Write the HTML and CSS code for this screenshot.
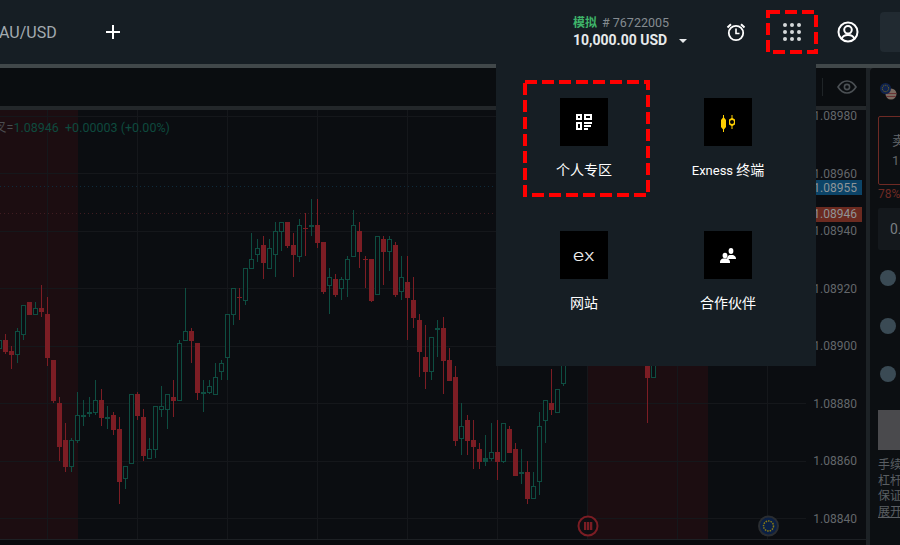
FILE: index.html
```html
<!DOCTYPE html>
<html lang="zh">
<head>
<meta charset="utf-8">
<title>Exness</title>
<link rel="stylesheet" href="styles.css">
</head>
<body>
<div class="app">
  <header class="topbar">
    <div class="tabs">
      <span class="tab">AU/USD</span>
      <svg class="plus" width="14" height="14" viewBox="0 0 14 14"><path d="M7 0v14M0 7h14" stroke="#fff" stroke-width="2"/></svg>
    </div>
    <div class="account">
      <div class="acc-top"><span class="acc-mode">模拟</span><span class="acc-id"># 76722005</span></div>
      <div class="acc-bal">10,000.00 USD<span class="caret"></span></div>
    </div>
    <svg class="ic-alarm" width="20" height="20" viewBox="0 0 20 20" fill="none" stroke="#fff" stroke-width="1.8"><circle cx="10" cy="11" r="7.2"/><path d="M10 6.500V11.500H13.500" stroke-width="1.6"/><path d="M1.500 5.500 5 2.200M18.500 5.500 15 2.200" stroke-width="2"/></svg>
    <div class="apps">
      <svg width="20" height="20" viewBox="0 0 20 20" fill="#d5d8da"><circle cx="3" cy="3" r="2"/><circle cx="10" cy="3" r="2"/><circle cx="17" cy="3" r="2"/><circle cx="3" cy="10" r="2"/><circle cx="10" cy="10" r="2"/><circle cx="17" cy="10" r="2"/><circle cx="3" cy="17" r="2"/><circle cx="10" cy="17" r="2"/><circle cx="17" cy="17" r="2"/></svg>
      <svg class="dash" viewBox="0 0 52 44" width="52" height="44"><rect x="2" y="2" width="48" height="40" fill="none" stroke="#f00" stroke-width="4" stroke-dasharray="12 5"/></svg>
    </div>
    <svg class="ic-user" width="22" height="22" viewBox="0 0 22 22" fill="none" stroke="#fff" stroke-width="2"><circle cx="11" cy="11" r="9.500"/><circle cx="11" cy="8.800" r="3.800"/><path d="M4.600 18c.8-2.800 3.200-4 6.400-4s5.600 1.200 6.400 4"/></svg>
    <div class="deposit"></div>
  </header>
  <div class="sep-top"></div>

  <div class="main">
    <section class="chart-col">
      <div class="toolbar">
        <span class="tb-div"></span>
        <svg class="ic-eye" width="20" height="14" viewBox="0 0 20 14" fill="none" stroke="#4b5054" stroke-width="1.6"><path d="M1 7c2.500-4 5.500-6 9-6s6.500 2 9 6c-2.500 4-5.500 6-9 6s-6.500-2-9-6z"/><circle cx="10" cy="7" r="2.600"/></svg>
      </div>
      <div class="tb-sep"></div>
      <svg id="chart" class="chart" width="866" height="429" viewBox="0 110 866 429">
        <rect x="0" y="110" width="866" height="429" fill="#0b0d11"/>
        <rect x="0" y="110" width="78" height="429" fill="#1c0d11"/>
        <rect x="587" y="110" width="121" height="429" fill="#1c0d11"/>
        <path d="M0 116.500H806M0 173.500H806M0 231.500H806M0 288.500H806M0 346.500H806M0 403.500H806M0 461.500H806M0 518.500H806M47.500 110V539M137.500 110V539M227.500 110V539M317.500 110V539M407.500 110V539M497.500 110V539M587.500 110V539M677.500 110V539M767.500 110V539" stroke="#15171b" stroke-width="1"/>
        <path d="M0 186.500H815" stroke="#0e2b3c" stroke-dasharray="1 3"/>
        <path d="M0 213.500H815" stroke="#3f1c21" stroke-dasharray="1 3"/>
        <g id="candles"></g>
        <text class="legend" x="-6" y="132"><tspan class="legend-k">叉=</tspan>1.08946  +0.00003 (+0.00%)</text>
        <rect x="812" y="180" width="50" height="15" fill="#0c4468"/>
        <rect x="812" y="207" width="50" height="15" fill="#6b2a20"/>
        <g class="axis">
          <text x="857" y="120">1.08980</text>
          <text x="857" y="178">1.08960</text>
          <text class="tag" x="857" y="192">1.08955</text>
          <text class="tag" x="857" y="218">1.08946</text>
          <text x="857" y="235">1.08940</text>
          <text x="857" y="293">1.08920</text>
          <text x="857" y="350">1.08900</text>
          <text x="857" y="408">1.08880</text>
          <text x="857" y="465">1.08860</text>
          <text x="857" y="523">1.08840</text>
        </g>
        <circle cx="588" cy="526" r="9.500" fill="#0f0d11" stroke="#7b1d24" stroke-width="2"/>
        <path d="M584 522h2.300v8H584zM587 522h2.300v8H587zM590 522h2.300v8H590z" fill="#7b1d24"/>
        <circle cx="768.500" cy="526" r="9.500" fill="#0a1f44" stroke="#2a2d31" stroke-width="2"/>
        <circle cx="768.500" cy="526" r="5" fill="none" stroke="#8a7a14" stroke-width="1.500" stroke-dasharray="1.500 1"/>
      </svg>
      <div class="chart-foot"></div>
    </section>
    <div class="gutter"></div>
    <aside class="panel">
      <svg class="flags" width="17" height="17" viewBox="0 0 17 17"><circle cx="11" cy="11" r="5.500" fill="#7a6a60"/><path d="M5.500 10.500h11M6 13.500h10" stroke="#6a3234" stroke-width="1.200"/><circle cx="5.500" cy="5.500" r="5.500" fill="#10234e"/><circle cx="5.500" cy="5.500" r="3.200" fill="none" stroke="#8a7a14" stroke-dasharray="1 1"/></svg>
      <div class="sell"><div class="sell-t">卖出</div><div class="sell-p">1.08946</div></div>
      <div class="pct">78%</div>
      <div class="input">0.01</div>
      <div class="radio"></div>
      <div class="radio"></div>
      <div class="radio"></div>
      <div class="confirm"></div>
      <div class="info">
        <div>手续费</div>
        <div>杠杆</div>
        <div>保证金</div>
        <div class="info-u">展开</div>
      </div>
    </aside>
  </div>

  <nav class="menu">
    <a class="item">
      <span class="tile"><svg width="16" height="16" viewBox="0 0 16 16" fill="none" stroke="#fff" stroke-width="2"><rect x="1" y="1" width="4" height="4"/><rect x="9" y="1" width="6" height="4"/><rect x="1" y="9" width="4" height="6"/><path d="M8 9h8M8 12h7M8 15h4"/></svg></span>
      <span class="label">个人专区</span>
      <svg class="dash dash-item" width="127" height="117" viewBox="0 0 127 117"><rect x="2" y="2" width="123" height="113" fill="none" stroke="#f00" stroke-width="4" stroke-dasharray="12 5"/></svg>
    </a>
    <a class="item">
      <span class="tile"><svg class="ic-candle" width="14" height="17" viewBox="0 0 14 17" fill="#ffcf01"><path d="M2 0h1v2.500L5 5v7l-2 2.500V17H2v-2.500L0 12V5l2-2.500z"/><path fill-rule="evenodd" d="M10.500 0h1v3L14 4.500v5L11.500 11v3h-1v-3L8 9.500v-5L10.500 3zM11 5a2 2 0 1 0 0 4 2 2 0 0 0 0-4z"/></svg></span>
      <span class="label"><span class="lat">Exness</span> 终端</span>
    </a>
    <a class="item">
      <span class="tile"><span class="ex">ex</span></span>
      <span class="label">网站</span>
    </a>
    <a class="item">
      <span class="tile"><svg width="16" height="15" viewBox="0 0 16 15" fill="#fff"><ellipse cx="11" cy="3" rx="2.400" ry="3"/><path d="M7 11c0-3 2-4 2.500-4h3c1 0 3.500 1 3.500 4z"/><ellipse cx="5" cy="7.500" rx="2.400" ry="2.800"/><path d="M0 15v-1.500c0-1.500 2-3 3-3h4c1 0 3 1.500 3 3V15z"/></svg></span>
      <span class="label">合作伙伴</span>
    </a>
  </nav>
</div>
<script src="chart.js"></script>
</body>
</html>
```
FILE: styles.css
```css
* { box-sizing: border-box; }
html, body { margin: 0; padding: 0; height: 100%; overflow: hidden; background: #080a0d; }
body { font-family: Roboto, "Noto Sans CJK SC", sans-serif; color: #fff; }
.app { position: relative; width: 900px; height: 545px; overflow: hidden; display: flex; flex-direction: column; }

.topbar { height: 64px; background: #161e24; display: flex; align-items: center; flex: none; }
.tabs { display: flex; align-items: center; width: 573px; flex: none; }
.tab { font-size: 16px; color: #a3abb0; margin-left: -1px; width: 107px; flex: none; }
.plus { flex: none; }
.account { width: 153px; flex: none; margin-top: -1px; }
.acc-top { font-size: 12px; line-height: 16px; display: flex; gap: 5px; }
.acc-mode { color: #3fb56a; font-weight: 700; }
.acc-id { color: #858c91; font-size: 12.5px; }
.acc-bal { font-size: 14px; font-weight: 700; line-height: 18px; color: #e6e9eb; display: flex; align-items: center; }
.caret { width: 0; height: 0; border: 4px solid transparent; border-top-color: #e6e9eb; border-bottom: 0; margin-left: 12px; margin-top: 2px; }
.ic-alarm { flex: none; margin-top: -1px; }
.apps { position: relative; width: 52px; height: 44px; margin-left: 20px; display: flex; align-items: center; justify-content: center; flex: none; margin-top: -1px; }
.dash { position: absolute; left: 0; top: 0; }
.ic-user { flex: none; margin-left: 19px; }
.deposit { width: 60px; height: 40px; background: #212a31; border-radius: 4px; margin-left: 21px; flex: none; }

.sep-top { height: 4px; background: #41484a; flex: none; }
.main { display: flex; flex: 1; min-height: 0; background: #23282b; }
.chart-col { width: 866px; flex: none; display: flex; flex-direction: column; background: #080a0d; }
.toolbar { height: 38px; background: #0a0d10; display: flex; align-items: center; justify-content: flex-end; padding-right: 9px; border-radius: 0 0 4px 0; flex: none; }
.tb-div { width: 1px; height: 18px; background: #1f2427; margin-right: 14px; }
.tb-sep { height: 4px; background: #23272a; flex: none; }
.chart { display: block; flex: none; }
.chart-foot { flex: 1; border-top: 1px solid #1d2024; }
.gutter { width: 4px; flex: none; background: #1d2226; }
.panel { flex: 1; min-width: 0; background: #0c0f12; border-radius: 4px 0 0 0; padding: 15px 0 0 8px; width: 30px; white-space: nowrap; overflow: hidden; }

.legend { font-family: Roboto, "Noto Sans CJK SC", sans-serif; font-size: 12.5px; fill: #0e4a3e; white-space: pre; }
.legend-k { fill: #4a4d50; }
.axis text { font-family: Roboto, sans-serif; font-size: 12px; fill: #63676b; text-anchor: end; }
.axis .tag { fill: #8f9497; }

.flags { display: block; margin: 0 0 0 2px; }
.sell { width: 60px; height: 69px; margin-top: 16px; border: 1px solid #6e2a24; border-radius: 2px; text-align: left; padding: 14px 0 0 13px; font-size: 13px; color: #63676b; line-height: 20px; }
.pct { font-size: 12px; color: #6e2a24; line-height: 18px; }
.input { width: 60px; height: 42px; margin-top: 5px; background: #14181c; font-size: 14px; color: #7a7f83; line-height: 42px; padding-left: 12px; border-radius: 2px; }
.radio { width: 16px; height: 16px; border-radius: 50%; background: #3a4a54; margin: 32px 0 0 2px; }
.input + .radio { margin-top: 20px; }
.confirm { width: 60px; height: 40px; background: #4a4a4d; margin-top: 28px; }
.info { font-size: 12px; line-height: 15.500px; color: #5a5f63; margin-top: 8px; }
.info-u { text-decoration: underline; }

.menu { position: absolute; left: 496px; top: 64px; width: 320px; height: 302px; background: #161e24; padding: 34px 16px 0; display: grid; grid-template-columns: 144px 144px; grid-auto-rows: 133px; z-index: 5; }
.item { position: relative; display: flex; flex-direction: column; align-items: center; }
.tile { width: 48px; height: 48px; background: #000; display: flex; align-items: center; justify-content: center; flex: none; }
.label { font-family: "Noto Sans CJK SC", sans-serif; font-size: 14px; line-height: 20px; margin-top: 13px; color: #fff; }
.lat { font-family: Roboto, sans-serif; font-size: 13px; }
.dash-item { left: 11px; top: -18px; }
.ex { font-family: Inter, sans-serif; font-size: 16px; line-height: 16px; font-weight: 300; color: #eee; margin-top: -1px; transform: scaleX(1.25); }
.ic-candle { margin-top: 2px; }
```
FILE: chart.js
```js
// [up?, wickTop, wickBottom, bodyTop, bodyBottom] at 3x price pixels from y=180
var D = [
[1,480,507,480,507],[0,462,522,480,516],[0,498,567,513,525],[1,444,549,454,525],[1,376,480,376,465],[0,366,405,366,405],[1,366,405,385,404],[0,315,411,384,396],[0,351,558,402,534],[0,540,669,540,663],[0,651,843,669,801],[0,729,876,780,861],[1,774,876,780,861],[1,636,789,705,783],[1,660,738,706,708],[1,651,711,697,699],[1,600,705,660,699],[0,627,738,660,714],[1,678,747,711,714],[0,696,765,705,750],[0,711,972,747,906],[1,858,927,858,897],[1,642,852,642,852],[0,636,720,642,708],[0,687,843,711,828],[1,774,837,807,837],[1,678,834,678,810],[1,618,711,678,690],[1,642,747,642,690],[0,600,711,651,663],[1,480,663,489,663],[1,324,483,453,483],[0,444,549,453,483],[0,489,660,489,639],[1,600,696,636,639],[1,600,642,618,639],[1,549,645,591,645],[1,540,600,549,576],[1,402,600,402,534],[1,324,435,324,405],[0,324,420,351,354],[1,264,375,264,363],[1,159,267,237,267],[1,177,246,204,225],
[0,168,297,195,249],[1,177,267,204,267],[1,126,291,153,225],[1,126,213,126,156],[0,126,204,126,198],[0,159,291,195,225],[1,117,246,135,231],[0,99,228,144,147],[1,57,168,135,138],[0,57,204,135,189],[0,186,342,186,336],[1,264,402,291,318],[0,282,351,297,345],[1,291,360,297,327],[1,228,351,237,300],[1,90,231,135,231],[0,126,264,153,216],[0,228,324,237,240],[0,237,366,237,363],[1,168,345,168,345],[0,168,315,177,216],[1,168,273,177,216],[0,186,351,195,345],[1,228,360,291,336],[0,228,480,306,354],[0,291,444,360,414],[0,402,591,420,516],[0,435,627,531,576],[1,471,600,471,576],[1,420,531,444,447],[0,411,642,444,543],[0,504,603,540,603],[0,558,798,591,783],[1,669,825,738,777],[0,705,825,720,783],[0,720,867,780,801],[0,789,867,807,846],[2,765,858,834,846],[1,729,843,816,837],[0,720,900,816,846],
[1,730,848,730,845],[0,738,819,747,819],[0,789,888,807,888],[1,807,912,877,879],[0,843,972,876,957],[1,876,957,918,957],[1,696,945,738,906],[1,660,789,660,723],[0,567,705,669,690],[1,627,699,627,699],[1,500,618,520,612]
];
var EXTRA = [[107,[0,300,729,300,594]],[108,[1,300,590,300,594]]];
var NS = 'http://www.w3.org/2000/svg';
var g = document.getElementById('candles');
function rect(x, y, w, h, attrs) {
  var r = document.createElementNS(NS, 'rect');
  r.setAttribute('x', x); r.setAttribute('y', y);
  r.setAttribute('width', w); r.setAttribute('height', h);
  for (var k in attrs) r.setAttribute(k, attrs[k]);
  g.appendChild(r);
}
function draw(i, c) {
  var x = 5 + 6 * i, up = c[0], col = up ? '#0e4d41' : '#7c1d24';
  var wt = Math.round(180 + c[1] / 3), wb = Math.round(180 + c[2] / 3);
  var bt = Math.round(180 + c[3] / 3), bb = Math.round(180 + c[4] / 3);
  rect(x, wt, 1, wb - wt, { fill: col });
  if (up === 1) {
    rect(x - 1.5, bt + 0.5, 4, Math.max(bb - bt - 1, 1), { fill: '#0b0d11', stroke: col, 'stroke-width': 1 });
  } else {
    rect(x - 2, bt, 5, Math.max(bb - bt, 1), { fill: col });
  }
}
D.forEach(function (c, n) { draw(n - 1, c); });
EXTRA.forEach(function (e) { draw(e[0], e[1]); });
```
